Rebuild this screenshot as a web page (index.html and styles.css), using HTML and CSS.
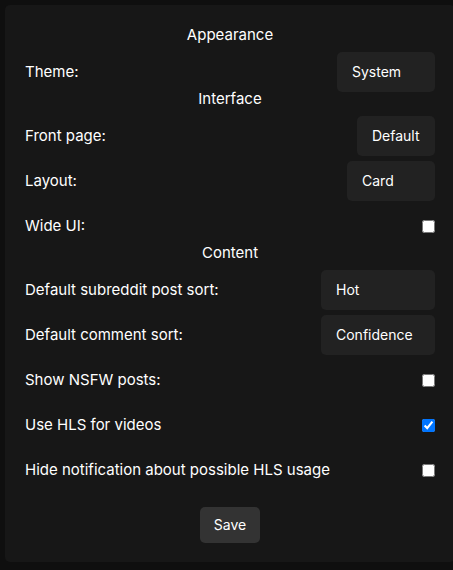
FILE: index.html
```html
<!DOCTYPE html>
<html>
<head>
<meta charset="utf-8">
<link rel="stylesheet" href="styles.css">
</head>
<body>
<div class="card">
  <div class="heading">Appearance</div>
  <div class="row">
    <span class="label">Theme:</span>
    <span class="select w-system">System</span>
  </div>
  <div class="heading">Interface</div>
  <div class="row">
    <span class="label">Front page:</span>
    <span class="select w-default">Default</span>
  </div>
  <div class="row">
    <span class="label">Layout:</span>
    <span class="select w-card">Card</span>
  </div>
  <div class="row">
    <span class="label">Wide UI:</span>
    <input type="checkbox" class="check">
  </div>
  <div class="heading">Content</div>
  <div class="row">
    <span class="label">Default subreddit post sort:</span>
    <span class="select w-sort">Hot</span>
  </div>
  <div class="row">
    <span class="label">Default comment sort:</span>
    <span class="select w-sort">Confidence</span>
  </div>
  <div class="row">
    <span class="label">Show NSFW posts:</span>
    <input type="checkbox" class="check">
  </div>
  <div class="row">
    <span class="label">Use HLS for videos</span>
    <input type="checkbox" class="check" checked>
  </div>
  <div class="row">
    <span class="label">Hide notification about possible HLS usage</span>
    <input type="checkbox" class="check">
  </div>
  <div class="actions">
    <button class="save">Save</button>
  </div>
</div>
</body>
</html>
```
FILE: styles.css
```css
html, body {
  margin: 0;
  padding: 0;
  overflow: hidden;
}
body {
  background: #0f0f0f;
  color: #ffffff;
  font-family: Inter, "Noto Sans", sans-serif;
  font-size: 15px;
  width: 453px;
  height: 570px;
}
.card {
  box-sizing: border-box;
  margin: 5px 0 0 5px;
  width: 450px;
  height: 557px;
  background: #171717;
  border-radius: 5px;
  padding: 23px 20px 0 20px;
  display: flex;
  flex-direction: column;
}
.heading {
  text-align: center;
  line-height: 14px;
  height: 14px;
  margin-bottom: 10px;
}
.row {
  display: flex;
  justify-content: space-between;
  align-items: center;
  height: 40px;
  margin-bottom: 5px;
}
.row + .heading {
  margin-top: -5px;
}
.label {
  padding-bottom: 2px;
}
.select {
  box-sizing: border-box;
  height: 40px;
  padding: 0 15px 2px 15px;
  background: #222222;
  border-radius: 5px;
  display: flex;
  align-items: center;
  font-size: 14px;
  color: #ffffff;
}
.w-system { width: 98px; }
.w-default { width: 78px; }
.w-card { width: 88px; }
.w-sort { width: 114px; }
.check {
  width: 13px;
  height: 13px;
  margin: 0;
}
.actions {
  display: flex;
  justify-content: center;
  margin-top: 12px;
}
.save {
  width: 60px;
  height: 36px;
  background: #333333;
  color: #ffffff;
  border: none;
  border-radius: 5px;
  font-family: Inter, "Noto Sans", sans-serif;
  font-size: 14px;
  padding: 0 0 1px 0;
}
```
